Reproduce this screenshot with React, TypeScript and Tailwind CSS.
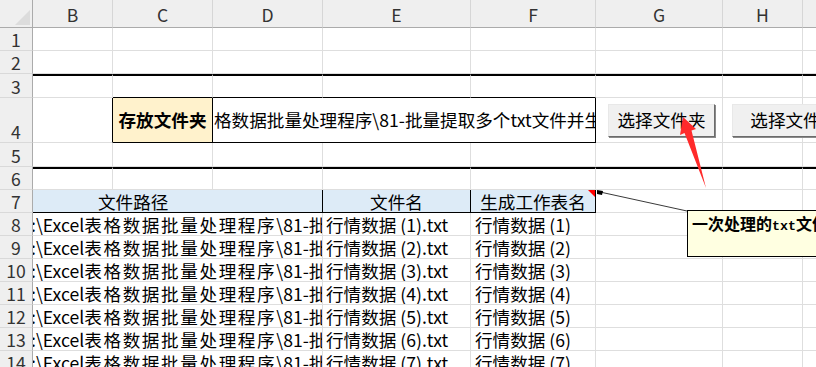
import React from "react"

const COLS = ["B", "C", "D", "E", "F", "G", "H", "I"]

function Cell({ className = "", children }: { className?: string; children?: React.ReactNode }) {
  return (
    <div className={`box-border border-r border-b border-[#dedede] overflow-hidden whitespace-nowrap ${className}`}>
      {children}
    </div>
  )
}

function RowHead({ n, className = "" }: { n: number; className?: string }) {
  return (
    <div
      className={`box-border flex items-end justify-center border-r border-b border-r-[#ababab] border-b-[#d9d9d9] bg-[#efefef] leading-[21px] text-[#333] ${className}`}
    >
      {n}
    </div>
  )
}

function Button({ label, className = "" }: { label: string; className?: string }) {
  return (
    <div
      className={`absolute top-[104px] flex h-[33px] w-[107px] items-center justify-center border border-t-[#e8e8e8] border-l-[#e8e8e8] border-r-[#6b6b6b] border-b-[#6b6b6b] bg-[#f0f0f0] text-[17.6px] text-black shadow-[1px_1px_0_#8a8a8a] ${className}`}
    >
      {label}
    </div>
  )
}

export default function App() {
  const rows = [8, 9, 10, 11, 12, 13, 14]
  return (
    <div className="relative h-[367px] w-[816px] overflow-hidden bg-white font-['Noto_Sans_CJK_SC','Noto_Sans',sans-serif] text-[17.6px] text-black">
      <div className="grid grid-cols-[33px_80px_100px_110px_148px_125px_127px_80px_80px] grid-rows-[28px_23px_23px_24px_45px_24px_23px_23px_23px_23px_23px_23px_23px_23px_23px]">
        {/* column headers */}
        <div className="box-border relative border-r border-b border-r-[#ababab] border-b-[#ababab] bg-[#efefef]">
          <svg className="absolute left-[15px] top-[10px]" width="15" height="15" viewBox="0 0 15 15">
            <polygon points="15,0 15,15 0,15" fill="#dcdcdc" />
          </svg>
        </div>
        {COLS.map((c) => (
          <div
            key={c}
            className="box-border flex items-end justify-center border-r border-b border-r-[#d6d6d6] border-b-[#ababab] bg-[#efefef] pb-[1px] leading-[22px] text-[#333]"
          >
            {c}
          </div>
        ))}

        {/* rows 1-2 */}
        {[1, 2].map((r) => (
          <React.Fragment key={r}>
            <RowHead n={r} />
            {COLS.map((c) => (
              <Cell key={c} />
            ))}
          </React.Fragment>
        ))}

        {/* row 3 */}
        <RowHead n={3} />
        {COLS.map((c) => (
          <Cell
            key={c}
            className={`border-t-2 border-t-black ${["C", "D", "E", "F"].includes(c) ? "border-b-black" : ""}`}
          />
        ))}

        {/* row 4 */}
        <RowHead n={4} />
        <Cell className="border-r-black" />
        <Cell className="flex items-center justify-center border-r-black border-b-black bg-[#fff2cc] font-bold">
          存放文件夹
        </Cell>
        <Cell className="col-span-3 flex items-center border-r-black border-b-black pl-[1px]">
          格数据批量处理程序\81-批量提取多个txt文件并生
        </Cell>
        <Cell />
        <Cell />
        <Cell />

        {/* row 5 */}
        <RowHead n={5} />
        {COLS.map((c) => (
          <Cell key={c} />
        ))}

        {/* row 6 */}
        <RowHead n={6} />
        {COLS.map((c) => (
          <Cell key={c} className="border-t-2 border-t-black" />
        ))}

        {/* row 7 */}
        <RowHead n={7} />
        <Cell className="col-span-3 flex items-end border-r-black border-b-black bg-[#ddebf7] pl-[65px] leading-[21px]">
          文件路径
        </Cell>
        <Cell className="flex items-end justify-center border-r-black border-b-black bg-[#ddebf7] leading-[21px]">
          文件名
        </Cell>
        <Cell className="relative flex items-end justify-center border-r-black border-b-black bg-[#ddebf7] leading-[21px]">
          生成工作表名
          <svg className="absolute right-0 top-0" width="7" height="7" viewBox="0 0 7 7">
            <polygon points="0,0 7,0 7,7" fill="#ff0000" />
          </svg>
        </Cell>
        <Cell />
        <Cell />
        <Cell />

        {/* rows 8-14 */}
        {rows.map((r) => {
          const i = r - 7
          return (
            <React.Fragment key={r}>
              <RowHead n={r} />
              <Cell className="col-span-3 flex items-end leading-[21px]">
                <span className="ml-[-2px]">
                  :\Excel<span className="tracking-[1.6px]">表格数据批量处理程序</span>\81-批
                </span>
              </Cell>
              <Cell className="flex items-end pl-[3px] leading-[21px]">行情数据 ({i}).txt</Cell>
              <Cell className="flex items-end pl-[4px] leading-[21px]">行情数据 ({i})</Cell>
              <Cell />
              <Cell />
              <Cell />
            </React.Fragment>
          )
        })}
      </div>

      {/* form buttons */}
      <Button label="选择文件夹" className="left-[608px]" />
      <Button label="选择文件" className="left-[732px]" />

      {/* drawing layer: red arrow and comment connector */}
      <svg className="pointer-events-none absolute left-0 top-0" width="816" height="367" viewBox="0 0 816 367">
        <polygon points="683,117 696,129 691.5,130.5 706,188 684.5,133 680,135" fill="#ff2a2a" />
        <line x1="600" y1="192" x2="687" y2="211" stroke="#3a3a3a" strokeWidth="1" />
        <polygon points="597,190 603,191 602,195 597,194" fill="#000" />
      </svg>

      {/* comment box */}
      <div className="absolute left-[687px] top-[210px] box-border h-[47px] w-[150px] border border-black bg-[#ffffe1] pl-[4px] pt-[2px] text-[16px] font-bold leading-[20px]">
        一次处理的<span className="font-['Liberation_Mono',monospace] text-[13.3px]">txt</span>文件
      </div>
    </div>
  )
}
